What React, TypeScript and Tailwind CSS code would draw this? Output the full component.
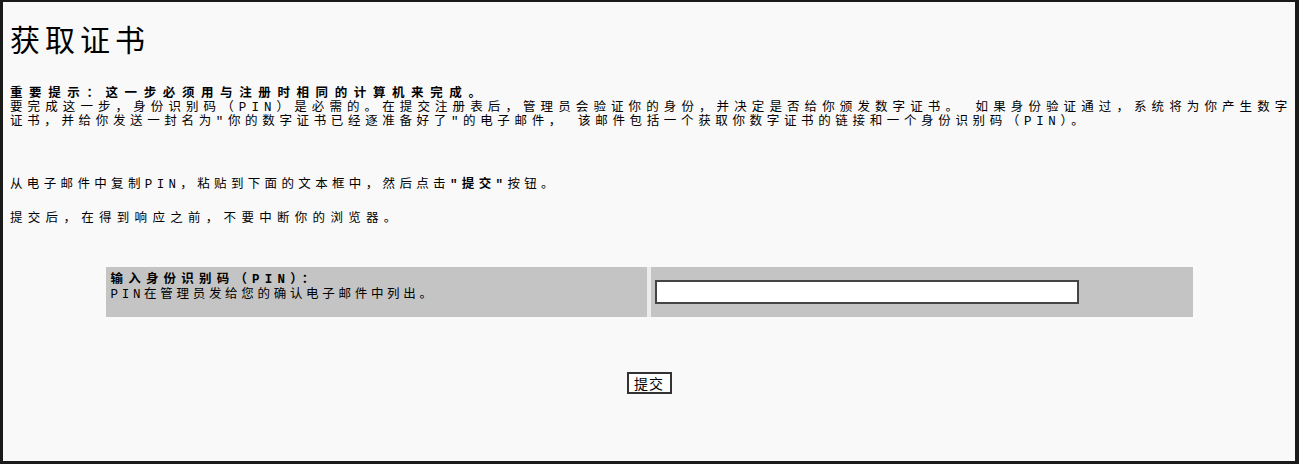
import React from "react";

const font = { fontFamily: '"Noto Sans CJK SC", "Noto Sans", sans-serif' };
const bodyFont = { fontFamily: '"Liberation Mono", "Noto Sans CJK SC", monospace' };

export default function App() {
  return (
    <div
      style={font}
      className="w-[1299px] h-[464px] overflow-hidden bg-[#f9f9f9] text-black border-l-[3px] border-t-2 border-r-[4px] border-b-[3px] border-[#1a1a1a] box-border"
    >
      <div className="flex flex-col pl-[7px] pt-[19px]">
        <h1 className="text-[30px] leading-[34px] tracking-[5px] font-normal whitespace-nowrap">获取证书</h1>

        <div style={bodyFont} className="mt-[32px] text-[12.5px] leading-[14px] whitespace-nowrap">
          <div className="font-bold tracking-[6.6px]">重要提示：这一步必须用与注册时相同的计算机来完成。</div>
          <div className="tracking-[5.1px]">要完成这一步，身份识别码（PIN）是必需的。在提交注册表后，管理员会验证你的身份，并决定是否给你颁发数字证书。 如果身份验证通过，系统将为你产生数字</div>
          <div className="tracking-[4.65px]">证书，并给你发送一封名为"你的数字证书已经逐准备好了"的电子邮件， 该邮件包括一个获取你数字证书的链接和一个身份识别码（PIN）。</div>
        </div>

        <div style={bodyFont} className="mt-[49px] text-[12.5px] leading-[14px] tracking-[4.35px] whitespace-nowrap">
          从电子邮件中复制PIN，粘贴到下面的文本框中，然后点击<span className="font-bold">"提交"</span>按钮。
        </div>

        <div style={bodyFont} className="mt-[19.5px] text-[12.5px] leading-[14px] tracking-[5.3px] whitespace-nowrap">
          提交后，在得到响应之前，不要中断你的浏览器。
        </div>
      </div>

      <div className="mt-[41.5px] mx-auto w-[1087px] grid grid-cols-2 gap-x-[4px] bg-[#ececec]">
        <div style={bodyFont} className="h-[50px] bg-[#c4c4c4] pl-[5px] pt-[6px] text-[12.5px] leading-[15px] whitespace-nowrap">
          <div className="font-bold tracking-[5.2px]">输入身份识别码（PIN）：</div>
          <div className="tracking-[3.7px]">PIN在管理员发给您的确认电子邮件中列出。</div>
        </div>
        <div className="h-[50px] bg-[#c4c4c4] pl-[4px] pt-[13px]">
          <input
            type="text"
            className="block w-[424px] h-[24px] bg-white border-2 border-[#444] outline-none"
          />
        </div>
      </div>

      <div className="mt-[55px] flex justify-center">
        <button
          type="button"
          style={font}
          className="w-[45px] h-[22px] bg-white border-2 border-[#333] text-[14px] leading-[16px] tracking-[1px] text-black flex items-center justify-center"
        >
          提交
        </button>
      </div>
    </div>
  );
}
